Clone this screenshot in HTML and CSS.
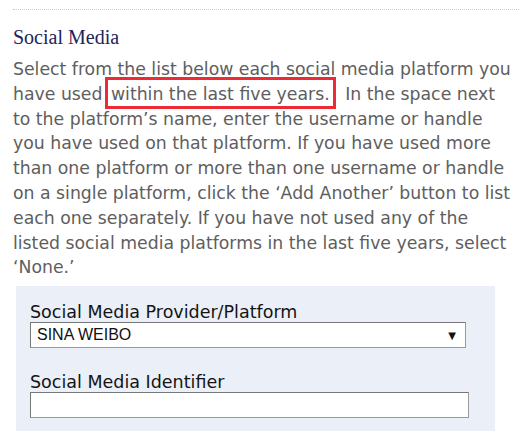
FILE: index.html
```html
<!DOCTYPE html>
<html lang="en">
<head>
    <meta charset="UTF-8">
    <title>Social Media</title>
    <link rel="stylesheet" href="styles.css">
</head>
<body>
    <div class="section">
        <div class="rule"></div>
        <h2>Social Media</h2>
        <p class="intro">Select from the list below each social media platform you have used <span class="mark">within the last five years.</span> In the space next to the platform’s name, enter the username or handle you have used on that platform. If you have used more than one platform or more than one username or handle on a single platform, click the ‘Add Another’ button to list each one separately. If you have not used any of the listed social media platforms in the last five years, select ‘None.’</p>

        <div class="panel">
            <label class="field-label">Social Media Provider/Platform</label>
            <div class="select">
                <span>SINA WEIBO</span>
                <span class="arrow">▼</span>
            </div>

            <label class="field-label second">Social Media Identifier</label>
            <input class="text-input" type="text">
        </div>
    </div>
</body>
</html>
```

FILE: styles.css
```css
body {
    margin: 0;
    background: #fff;
}
.section {
    padding: 0 13px;
}
.rule {
    margin-top: 9px;
    border-top: 1px dotted #c8c8c8;
}
h2 {
    font-family: "Liberation Serif", "Times New Roman", serif;
    font-weight: normal;
    font-size: 20px;
    line-height: 24px;
    color: #23235a;
    margin: 15px 0 0;
}
.intro {
    font-family: "DejaVu Sans", Verdana, sans-serif;
    font-size: 17.3px;
    line-height: 24.8px;
    color: #5e5e5e;
    margin: 8px 0 0;
    width: 503px;
}
.mark {
    position: relative;
    margin: 0 10px 0 3px;
}
.mark::after {
    content: "";
    position: absolute;
    left: -6px;
    right: -6px;
    top: -7px;
    bottom: -5px;
    border: 3px solid #ec2b35;
}
.panel {
    margin: 6px 0 0 3px;
    width: 479px;
    box-sizing: border-box;
    padding: 16px 14px 13px;
    background: #ebeff7;
}
.field-label {
    display: block;
    font-family: "DejaVu Sans", Verdana, sans-serif;
    font-size: 17.5px;
    line-height: 20px;
    color: #141414;
}
.field-label.second {
    margin-top: 24px;
}
.select {
    display: flex;
    align-items: center;
    justify-content: space-between;
    width: 436px;
    height: 26px;
    box-sizing: border-box;
    padding: 0 9px 0 6px;
    background: #fff;
    border: 1px solid #9a9a9a;
    border-top-color: #777;
    border-left-color: #777;
    font-family: "Liberation Sans", Arial, sans-serif;
    font-size: 16px;
    color: #111;
}
.arrow {
    font-family: "DejaVu Sans", sans-serif;
    font-size: 10px;
    color: #111;
}
.text-input {
    display: block;
    width: 439px;
    height: 26px;
    box-sizing: border-box;
    margin: 0;
    background: #fff;
    border: 1px solid #9a9a9a;
    border-top-color: #777;
    border-left-color: #777;
}
```
